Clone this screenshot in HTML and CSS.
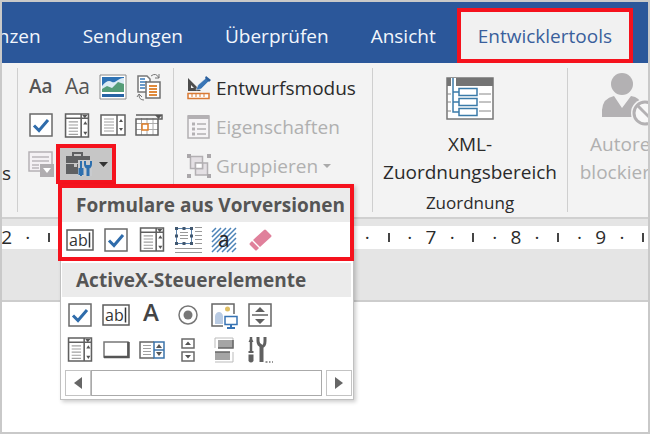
FILE: index.html
```
<!DOCTYPE html>
<html lang="de">
<head>
    <meta charset="UTF-8">
    <meta name="viewport" content="width=device-width, initial-scale=1.0">
    <title>Entwicklertools</title>
    <link rel="stylesheet" href="styles.css">
</head>
<body>
    <!-- icons used more than once -->
    <svg class="sprite" width="0" height="0" aria-hidden="true">
        <symbol id="check" viewBox="0 0 24 24">
            <rect x="1" y="1" width="22" height="22" fill="#fff" stroke="#6a6a6a" stroke-width="1.5"/>
            <path d="M5 12.5l5 5L19 7" fill="none" stroke="#2f6cab" stroke-width="3"/>
        </symbol>
        <symbol id="combo" viewBox="0 0 24 24">
            <path d="M1 1h22v22H1zM1 5h22M16 1v22" fill="#fff" stroke="#606060" stroke-width="1.5"/>
            <path d="M4 8.500h9M4 11.500h9M4 14.500h9M4 17.500h9M4 20.500h9" stroke="#a0a0a0"/>
            <path d="M17 2h5l-2.500 3zM18 11h4l-2-3zM18 18h4l-2 3z" fill="#555"/>
        </symbol>
        <symbol id="abl" viewBox="0 0 28 24">
            <rect x="1" y="2" width="26" height="20" fill="#fff" stroke="#5c5c5c" stroke-width="1.500"/>
            <text x="3" y="17.500" class="glyph">ab</text>
            <path d="M23.500 4.500v15" stroke="#333" stroke-width="1.500"/>
        </symbol>
    </svg>

    <div class="window">
        <nav class="tabs">
            <a href="#">Referenzen</a>
            <a href="#">Sendungen</a>
            <a href="#">Überprüfen</a>
            <a href="#">Ansicht</a>
            <a href="#" class="active">Entwicklertools</a>
        </nav>

        <div class="ribbon">
            <div class="group addins"><span>s</span></div>

            <div class="group controls">
                <button aria-label="Rich-Text"><svg width="26" height="24"><text x="1" y="18" class="aa bold">Aa</text></svg></button>
                <button aria-label="Nur-Text"><svg width="28" height="24"><text x="2" y="19" class="aa">Aa</text></svg></button>
                <button aria-label="Bild">
                    <svg width="28" height="26" viewBox="0 0 28 26">
                        <path d="M1 1h26v24H1z" fill="#fff" stroke="#8a8a8a"/>
                        <path d="M3 3h22v12H3z" fill="#2f73b5"/>
                        <path d="M3 12c4-5 7-6 10-4s7-5 12-4v14H3z" fill="#dcebf5"/>
                        <path d="M3 15l5-3 5 2 6-6 6 2v8H3z" fill="#559d78"/>
                        <path d="M3 18h22v2H3z" fill="#fff"/>
                        <path d="M3 20h22v3H3z" fill="#2764a4"/>
                    </svg>
                </button>
                <button aria-label="Baustein">
                    <svg width="24" height="28" viewBox="0 0 24 28" fill="none">
                        <path d="M1 3h9l3 3v13H1z" fill="#fff" stroke="#777" stroke-width="1.500"/>
                        <path d="M3 6h5M3 9h7M3 12h5M3 15h5" stroke="#3a7ab8" stroke-width="1.500"/>
                        <path d="M9 9h14v16H9z" fill="#fff" stroke="#707070" stroke-width="1.500"/>
                        <path d="M12 13h8M12 16h8M12 19h8M12 22h8" stroke="#e08a3c" stroke-width="2"/>
                        <path d="M14 3q5-4 8 2M22 1v4h-4M7 27q-5 0-5-5M0 24l2-3 3 3" stroke="#777"/>
                    </svg>
                </button>
                <button aria-label="Kontrollkästchen"><svg width="24" height="24"><use href="#check"/></svg></button>
                <button aria-label="Kombinationsfeld"><svg width="26" height="25"><use href="#combo"/></svg></button>
                <button aria-label="Dropdownliste">
                    <svg width="26" height="24" viewBox="0 0 26 24">
                        <path d="M1 2h24v20H1zM17 2v20" fill="#fff" stroke="#606060" stroke-width="1.500"/>
                        <path d="M4 6h10M4 9h10M4 12h10M4 15h10M4 18h10" stroke="#a0a0a0"/>
                        <path d="M19 9h4l-2-3zM19 15h4l-2 3z" fill="#555"/>
                    </svg>
                </button>
                <button aria-label="Datum">
                    <svg width="28" height="24" viewBox="0 0 28 24" fill="none">
                        <path d="M1 5h22v17H1z" fill="#fff"/>
                        <path d="M6.500 5v17M12 5v17M18 5v17M1 10.500h22M1 16.500h22" stroke="#aaa"/>
                        <path d="M1 2h26v4H1v16h22V6" stroke="#606060" stroke-width="1.500"/>
                        <path d="M20 2h7l-3.500 4z" fill="#555"/>
                        <path d="M7 11h6v6H7z" fill="#fff" stroke="#de7d27" stroke-width="1.500"/>
                    </svg>
                </button>
                <button aria-label="Wiederholter Abschnitt">
                    <svg width="26" height="26" viewBox="0 0 26 26">
                        <path d="M1 1h23v19H1z" fill="#f4f1f4" stroke="#b5b1b5" stroke-width="1.500"/>
                        <path d="M4 6h17M4 10h17M4 14h7M4 17h7" stroke="#bbb7bb" stroke-width="1.500"/>
                        <path d="M12 13h14v13H12z" fill="#b0adb0"/>
                        <path d="M15 17h8l-4 5z" fill="#fff"/>
                    </svg>
                </button>
                <div class="legacy">
                    <button class="legacy-btn" aria-label="Vorversionstools" aria-expanded="true">
                        <svg width="28" height="26" viewBox="0 0 28 26">
                            <path d="M8 5V2h9v3" fill="none" stroke="#5f6062" stroke-width="2"/>
                            <path d="M1 5h24v7H1zM1 13h8v3h3v-3h5v10H1z" fill="#5f6062"/>
                            <path d="M13 9h14v16H13z" fill="#c9cbce"/>
                            <path d="M16 10v7M16 18v7" stroke="#2d6fae" stroke-width="2"/>
                            <path d="M13.500 17h5v7h-5z" fill="#2d6fae"/>
                            <path d="M20 10v3q0 3 2.500 4v8M26 10v3q0 3-2.500 4v8M20 15h6" fill="none" stroke="#2d6fae" stroke-width="2"/>
                        </svg>
                        <svg width="9" height="5"><path d="M0 0h9l-4.500 5z" fill="#333"/></svg>
                    </button>

                    <div class="menu">
                        <section class="highlight">
                            <h2>Formulare aus Vorversionen</h2>
                            <div class="icons">
                                <button aria-label="Textfeld"><svg width="28" height="24"><use href="#abl"/></svg></button>
                                <button aria-label="Kontrollkästchen"><svg width="24" height="24"><use href="#check"/></svg></button>
                                <button aria-label="Kombinationsfeld"><svg width="26" height="25"><use href="#combo"/></svg></button>
                                <button aria-label="Rahmen">
                                    <svg width="28" height="28" viewBox="0 0 28 28" fill="none">
                                        <path d="M2.500 2.500h15v15h-15z" fill="#fff" stroke="#5b83ad"/>
                                        <path d="M6 6.500h8M6 9.500h8M6 12.500h8M21 1.500h7M21 5.500h7M21 9.500h7M21 13.500h7M21 17.500h7M1 22.500h27M1 26.500h27" stroke="#999"/>
                                        <path d="M1 1h3v3H1zM8.500 1h3v3h-3zM16 1h3v3h-3zM1 8.500h3v3H1zM16 8.500h3v3h-3zM1 16h3v3H1zM8.500 16h3v3h-3zM16 16h3v3h-3z" fill="#41576f"/>
                                    </svg>
                                </button>
                                <button aria-label="Feldschattierung">
                                    <svg width="26" height="26" viewBox="0 0 26 26">
                                        <path d="M1 5l4-4M1 10l9-9M1 15L15 1M1 20L20 1M1 25L25 1M6 25L25 6M11 25l14-14M16 25l9-9M21 25l4-4" stroke="#4c83b8" stroke-width="1.500"/>
                                        <text x="7" y="20" class="field-a">a</text>
                                    </svg>
                                </button>
                                <button aria-label="Zurücksetzen">
                                    <svg width="24" height="24" viewBox="0 0 24 24">
                                        <path d="M16 2q1-1 2 0l5 5q1 1 0 2L12 19l-7-7z" fill="#e0809b"/>
                                        <path d="M4 13l7 7-2 2q-1 1-2 0l-5-5q-1-1 0-2z" fill="#e0809b"/>
                                    </svg>
                                </button>
                            </div>
                        </section>
                        <section class="activex">
                            <h2>ActiveX-Steuerelemente</h2>
                            <div class="icons">
                                <button aria-label="Kontrollkästchen"><svg width="24" height="24"><use href="#check"/></svg></button>
                                <button aria-label="Textfeld"><svg width="28" height="24"><use href="#abl"/></svg></button>
                                <button aria-label="Bezeichnung"><svg width="20" height="26"><text x="1" y="19" class="label-a">A</text></svg></button>
                                <button aria-label="Optionsfeld">
                                    <svg width="22" height="22" viewBox="0 0 22 22">
                                        <circle cx="11" cy="11" r="9" fill="#fff" stroke="#777" stroke-width="1.500"/>
                                        <circle cx="11" cy="11" r="4.500" fill="#777"/>
                                    </svg>
                                </button>
                                <button aria-label="Bild">
                                    <svg width="27" height="28" viewBox="0 0 27 28">
                                        <path d="M12 25H1V3h22v10" fill="#fff" stroke="#666" stroke-width="1.500"/>
                                        <path d="M4 23v-8q1-4 4-4t4 4v8z" fill="#b9cbe3"/>
                                        <circle cx="16.500" cy="8" r="2.500" fill="#dfbe62"/>
                                        <path d="M14 15.500h12v8H14z" fill="#fff" stroke="#3773b4" stroke-width="1.500"/>
                                        <path d="M20 23v4M16 27h8" stroke="#3773b4" stroke-width="2"/>
                                    </svg>
                                </button>
                                <button aria-label="Drehfeld">
                                    <svg width="24" height="24" viewBox="0 0 24 24">
                                        <path d="M1 1h22v22H1zM4 12h16" fill="#fff" stroke="#666" stroke-width="1.500"/>
                                        <path d="M7 9h10l-5-5zM7 16h10l-5 5z" fill="#606060"/>
                                    </svg>
                                </button>
                                <button aria-label="Kombinationsfeld"><svg width="26" height="25"><use href="#combo"/></svg></button>
                                <button aria-label="Befehlsschaltfläche">
                                    <svg width="27" height="18" viewBox="0 0 27 18">
                                        <path d="M1 1h24v15H1z" fill="#fff" stroke="#777" stroke-width="1.500"/>
                                        <path d="M1 16h24.500V1" fill="none" stroke="#555" stroke-width="2.500"/>
                                    </svg>
                                </button>
                                <button aria-label="Listenfeld">
                                    <svg width="26" height="20" viewBox="0 0 26 20">
                                        <path d="M15 18H1V2h14" fill="#fff" stroke="#666" stroke-width="1.500"/>
                                        <path d="M4 5.500h8M4 8.500h8M4 11.500h8M4 14.500h8" stroke="#a0a0a0"/>
                                        <path d="M15 2h10v16H15zM15 10h10" fill="#fff" stroke="#3c74aa" stroke-width="1.500"/>
                                        <path d="M17 8h6l-3-4zM17 12h6l-3 4z" fill="#555"/>
                                    </svg>
                                </button>
                                <button aria-label="Bildlaufleiste">
                                    <svg width="14" height="24" viewBox="0 0 14 24">
                                        <path d="M1 1h12v9H1zM1 14h12v9H1z" fill="#fff" stroke="#6a6a6a" stroke-width="1.500"/>
                                        <path d="M4 7h6L7 3.500zM4 17h6l-3 3.500z" fill="#555"/>
                                    </svg>
                                </button>
                                <button aria-label="Umschaltfläche">
                                    <svg width="20" height="26" viewBox="0 0 20 26">
                                        <path d="M1 11V1h18v10" fill="none" stroke="#bbb"/>
                                        <path d="M4 3h15v8H4zM1 15h15v8H1z" fill="#a5a5a5"/>
                                        <path d="M4 11h15V3M1 15h15" fill="none" stroke="#666" stroke-width="1.500"/>
                                        <path d="M19 15v10H1" fill="none" stroke="#bbb"/>
                                    </svg>
                                </button>
                                <button aria-label="Weitere Steuerelemente">
                                    <svg width="26" height="28" viewBox="0 0 26 28">
                                        <path d="M4 1v14" stroke="#606060" stroke-width="2.500"/>
                                        <path d="M1.500 6L4 1l2.500 5zM1.500 15h5v2h-5zM1.500 18.500h5V25q-2.500 3-5 0z" fill="#606060"/>
                                        <path d="M11 1v4q0 4 3.500 5t3.500-5V1" fill="none" stroke="#606060" stroke-width="3"/>
                                        <path d="M14.500 9v17" stroke="#606060" stroke-width="4"/>
                                        <path d="M18.500 26h2M22 26h1.500M25 26h1" stroke="#777" stroke-width="1.500"/>
                                    </svg>
                                </button>
                            </div>
                        </section>
                        <div class="scrollbar">
                            <button aria-label="Nach links"><svg width="8" height="12"><path d="M8 0v12L0 6z" fill="#666"/></svg></button>
                            <div class="thumb"></div>
                            <button aria-label="Nach rechts"><svg width="8" height="12"><path d="M0 0v12l8-6z" fill="#666"/></svg></button>
                        </div>
                    </div>
                </div>
            </div>

            <div class="group actions">
                <button>
                    <svg width="24" height="24" viewBox="0 0 24 24">
                        <path d="M1 2v13h13zM4 9l3 3H4z" fill="#4c4c4c" fill-rule="evenodd"/>
                        <path d="M9 14l2-5 8-7 3 3-8 8z" fill="#3a76b6" stroke="#f3f3f3" stroke-width=".5"/>
                        <path d="M19 0l5 4-2 2-4-4z" fill="#2b5f9c"/>
                        <path d="M1 17.500h21v5H1z" fill="#fff" stroke="#d97a34" stroke-width="1.500"/>
                        <path d="M5 18v3M9 18v3M13 18v3M17 18v3" stroke="#d97a34"/>
                    </svg>
                    <span>Entwurfsmodus</span>
                </button>
                <button disabled>
                    <svg width="24" height="26" viewBox="0 0 24 26">
                        <path d="M1 2h21v22H1z" fill="#f6f4f6" stroke="#b3b0b3" stroke-width="1.500"/>
                        <path d="M1 1h21v4H1z" fill="#b3b0b3"/>
                        <path d="M10 10h9M10 15h9M10 20h9" stroke="#b3b0b3" stroke-width="1.500"/>
                        <path d="M5 8.500h3v3H5zM5 13.500h3v3H5zM5 18.500h3v3H5z" fill="#b3b0b3"/>
                    </svg>
                    <span>Eigenschaften</span>
                </button>
                <button disabled>
                    <svg width="24" height="26" viewBox="0 0 24 26">
                        <path d="M3.500 3.500h12v12h-12zM8.500 10h12v12h-12z" fill="#e4e0e4" stroke="#b3b0b3" stroke-width="1.500"/>
                        <path d="M8.500 10h7v5.500h-7z" fill="#fff" stroke="#b3b0b3" stroke-width="1.500"/>
                        <path d="M0 1h4v4H0zM20 1h4v4h-4zM0 21h4v4H0zM20 21h4v4h-4z" fill="#aaa7aa"/>
                    </svg>
                    <span>Gruppieren</span>
                    <svg width="8" height="4"><path d="M0 0h8l-4 4z" fill="#aaa"/></svg>
                </button>
            </div>

            <div class="group mapping">
                <button class="large">
                    <svg width="48" height="44" viewBox="0 0 48 44" fill="none">
                        <path d="M1 1h46v41H1z" fill="#fff" stroke="#777" stroke-width="1.500"/>
                        <path d="M1 1h46v8H1z" fill="#747474"/>
                        <path d="M1 17h4M1 25h4M1 34h4M33 17h12M33 25h12M33 34h12" stroke="#888"/>
                        <path d="M5 1h5v8H5z" fill="#fff"/>
                        <path d="M7 1v34h6M7 15h6M7 25h6" stroke="#3b7ba9" stroke-width="1.500"/>
                        <path d="M13 11.500h18v7H13zM13 21.500h18v7H13zM13 31.500h18v7H13z" fill="#fff" stroke="#3b7ba9" stroke-width="1.500"/>
                    </svg>
                    <span>XML-<br>Zuordnungsbereich</span>
                </button>
                <div class="group-label">Zuordnung</div>
            </div>

            <div class="group protect">
                <button class="large" disabled>
                    <svg width="54" height="54" viewBox="0 0 54 54">
                        <circle cx="23" cy="12" r="11" fill="#b3b1b3"/>
                        <path d="M3 45V38q1-12 12-14l8 12 9-12q9 1 11 10v11z" fill="#b3b1b3"/>
                        <circle cx="46" cy="41" r="14" fill="#f3f3f3"/>
                        <circle cx="46" cy="41" r="11" fill="#f8f8f8" stroke="#b3b1b3" stroke-width="3"/>
                        <path d="M38 33l16 16" stroke="#b3b1b3" stroke-width="3"/>
                    </svg>
                    <span>Autoren<br>blockieren</span>
                </button>
            </div>
        </div>

        <div class="ruler">
            <span>2</span><span>·</span><i></i><span>·</span>
            <span>3</span><span>·</span><i></i><span>·</span>
            <span>4</span><span>·</span><i></i><span>·</span>
            <span>5</span><span>·</span><i></i><span>·</span>
            <span>6</span><span>·</span><i></i><span>·</span>
            <span>7</span><span>·</span><i></i><span>·</span>
            <span>8</span><span>·</span><i></i><span>·</span>
            <span>9</span><span>·</span><i></i>
        </div>

        <main class="page"></main>
    </div>
</body>
</html>
```

FILE: styles.css
```
* {
    box-sizing: border-box;
}
body {
    margin: 0;
    font-family: "Open Sans", "Noto Sans", sans-serif;
    font-size: 19px;
    color: #2b2b2b;
}
button {
    display: flex;
    align-items: center;
    justify-content: center;
    padding: 0;
    border: none;
    background: none;
    font: inherit;
    color: inherit;
    cursor: pointer;
}
button:disabled {
    color: #b0b0b0;
    cursor: default;
}
svg {
    display: block;
    flex: none;
    overflow: visible;
}
.sprite {
    position: absolute;
}
.window {
    display: flex;
    flex-direction: column;
    height: 100vh;
    border: 2px solid #c9c9c9;
    background-color: #e5e5e5;
    overflow: hidden;
}

/* tabs */
.tabs {
    display: flex;
    flex: none;
    justify-content: flex-end;
    height: 61px;
    padding: 6px 15px 0 0;
    background-color: #2b579a;
    overflow: hidden;
}
.tabs a {
    display: flex;
    align-items: center;
    padding: 0 21px;
    color: #f2f6fc;
    text-decoration: none;
}
.tabs .active {
    padding: 0 17px;
    border: 4px solid #f5121d;
    background-color: #f1f1f1;
    color: #3a5f9c;
}

/* ribbon */
.ribbon {
    display: flex;
    flex: none;
    padding: 5px 0;
    border-bottom: 2px solid #d0d0d0;
    background-color: #f3f3f3;
}
.group {
    flex: none;
    height: 144px;
    border-right: 1px solid #cfcfcf;
}
.addins {
    display: flex;
    align-items: flex-end;
    width: 16px;
    padding-bottom: 26px;
}
.controls {
    display: grid;
    grid-template-columns: repeat(4, 36px);
    grid-template-rows: 38px 38px 40px;
    width: 156px;
    padding-left: 5px;
}
.aa {
    font-size: 21px;
    fill: #555;
}
.aa.bold {
    font-size: 19px;
    font-weight: 600;
}
.glyph {
    font-size: 16px;
    fill: #333;
}
.field-a {
    font-size: 21px;
    fill: #222;
}
.label-a {
    font-size: 24px;
    font-weight: 600;
    fill: #444;
}
.legacy {
    position: relative;
    grid-column: span 2;
    margin: 0 15px 0 -3px;
}
.legacy-btn {
    gap: 6px;
    width: 100%;
    height: 100%;
    border: 4px solid #f5121d;
    background-color: #c6c6c6;
}
.actions {
    display: flex;
    flex-direction: column;
    width: 199px;
    padding-left: 13px;
}
.actions button {
    justify-content: flex-start;
    gap: 5px;
    height: 39px;
}
.mapping {
    display: flex;
    flex-direction: column;
    justify-content: space-between;
    width: 195px;
}
.large {
    flex-direction: column;
    gap: 9px;
    width: 100%;
    padding-top: 9px;
    line-height: 28px;
}
.group-label {
    font-size: 17px;
    line-height: 18px;
    text-align: center;
}
.protect {
    width: 116px;
    border: none;
}
.protect .large {
    gap: 4px;
    padding-top: 4px;
}

/* menu */
.menu {
    position: absolute;
    top: 100%;
    left: 4px;
    z-index: 1;
    width: 294px;
    border: 1px solid #c0c0c0;
    border-top: none;
    background-color: #fff;
    box-shadow: 2px 2px 4px rgba(0, 0, 0, 0.2);
}
.menu h2 {
    margin: 0;
    padding-left: 14px;
    background-color: #ebebeb;
    color: #555;
    font-size: 19px;
    line-height: 34px;
    white-space: nowrap;
}
.icons {
    display: grid;
    grid-template-columns: repeat(6, 36px);
    grid-auto-rows: 35px;
}
.highlight {
    margin: 0 -1px 0 -3px;
    border: 4px solid #f5121d;
}
.activex {
    padding: 2px 2px 0 1px;
}
.scrollbar {
    display: flex;
    height: 26px;
    margin: 3px 1px 3px 4px;
}
.scrollbar button {
    width: 26px;
    border: 1px solid #c3c3c3;
}
.thumb {
    flex: 1;
    margin-right: 4px;
    border: 1px solid #aaa;
}

/* ruler and page */
.ruler {
    display: flex;
    flex: none;
    align-items: center;
    height: 23px;
    margin: 7px -6px 51px;
    background-color: #fff;
    line-height: 23px;
}
.ruler span,
.ruler i {
    flex: 1 0 0;
    text-align: center;
}
.ruler i::before {
    content: "";
    display: block;
    width: 2px;
    height: 9px;
    margin: 0 auto;
    background-color: #444;
}
.page {
    flex: 1;
    border-top: 2px solid #cdcdcd;
    background-color: #fff;
}
```
